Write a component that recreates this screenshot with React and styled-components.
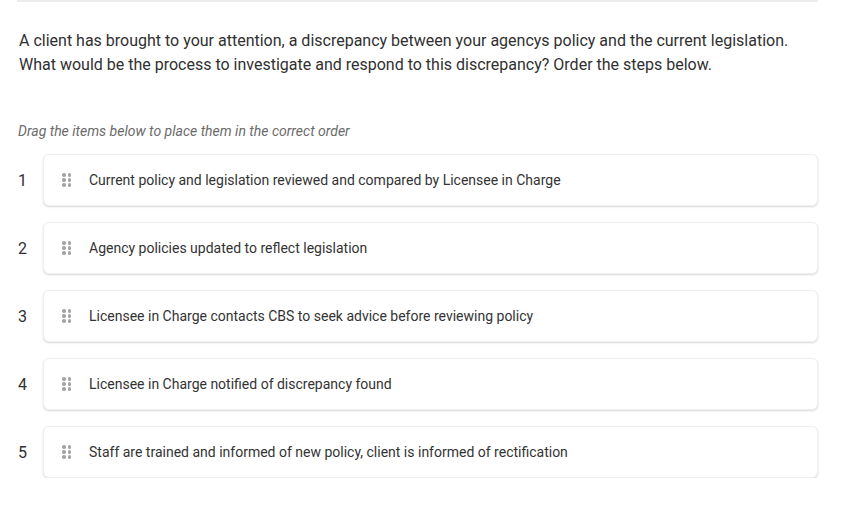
import React from "react";
import styled, { createGlobalStyle } from "styled-components";

const Global = createGlobalStyle`
  html, body { margin: 0; padding: 0; background: #fff; }
  body { font-family: Roboto, "Noto Sans", Arial, sans-serif; }
`;

const Page = styled.div`
  width: 852px;
  padding: 0 34px 0 17px;
  box-sizing: border-box;
`;

const TopRule = styled.div`
  height: 0;
  border-top: 2px solid #ececec;
`;

const Question = styled.p`
  margin: 27px 0 0 2px;
  font-size: 16px;
  line-height: 24px;
  color: #303030;
`;

const Hint = styled.p`
  margin: 44px 0 0 1px;
  font-size: 14px;
  line-height: 20px;
  font-style: italic;
  color: #6b6b6b;
`;

const List = styled.ol`
  list-style: none;
  margin: 13px 0 0 0;
  padding: 0;
  display: flex;
  flex-direction: column;
  gap: 16px;
`;

const Row = styled.li`
  display: flex;
  align-items: center;
`;

const Num = styled.span`
  width: 26px;
  padding-left: 1px;
  box-sizing: border-box;
  font-size: 16px;
  color: #303030;
`;

const Card = styled.div`
  flex: 1;
  height: 52px;
  box-sizing: border-box;
  display: flex;
  align-items: center;
  gap: 18px;
  padding-left: 18px;
  background: #fff;
  border: 1px solid #efefef;
  border-radius: 6px;
  box-shadow: 0 1px 2px rgba(0, 0, 0, 0.16);
`;

const Handle = styled.span`
  display: grid;
  grid-template-columns: repeat(2, 3.5px);
  grid-auto-rows: 3.5px;
  gap: 1.5px 2px;
  span {
    width: 3.5px;
    height: 3.5px;
    border-radius: 50%;
    background: #a3a3a3;
  }
`;

const Label = styled.span`
  font-size: 14px;
  color: #333;
`;

const items = [
  "Current policy and legislation reviewed and compared by Licensee in Charge",
  "Agency policies updated to reflect legislation",
  "Licensee in Charge contacts CBS to seek advice before reviewing policy",
  "Licensee in Charge notified of discrepancy found",
  "Staff are trained and informed of new policy, client is informed of rectification",
];

export default function App() {
  return (
    <Page>
      <Global />
      <TopRule />
      <Question>
        A client has brought to your attention, a discrepancy between your agencys policy and the current legislation.
        <br />
        What would be the process to investigate and respond to this discrepancy? Order the steps below.
      </Question>
      <Hint>Drag the items below to place them in the correct order</Hint>
      <List>
        {items.map((t, i) => (
          <Row key={i}>
            <Num>{i + 1}</Num>
            <Card>
              <Handle>
                {Array.from({ length: 6 }).map((_, k) => (
                  <span key={k} />
                ))}
              </Handle>
              <Label>{t}</Label>
            </Card>
          </Row>
        ))}
      </List>
    </Page>
  );
}
